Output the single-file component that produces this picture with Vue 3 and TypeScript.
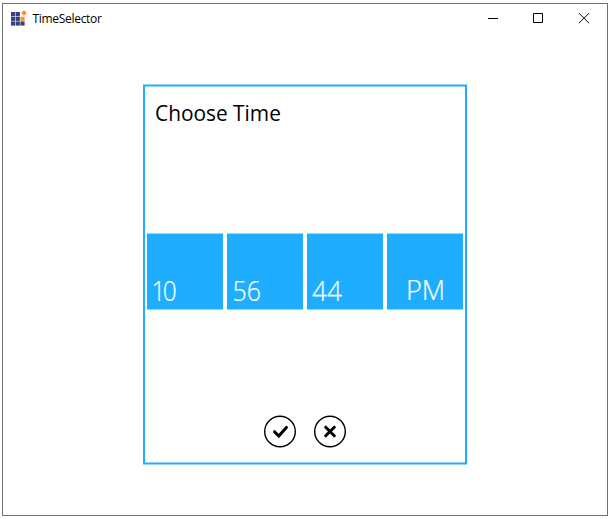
<script setup lang="ts">
import { ref } from 'vue'

interface TimePart {
  id: string
  value: string
}

const parts = ref<TimePart[]>([
  { id: 'hour', value: '10' },
  { id: 'minute', value: '56' },
  { id: 'second', value: '44' },
  { id: 'meridiem', value: 'PM' },
])
</script>

<template>
  <div class="window">
    <header class="titlebar">
      <svg class="logo" width="18" height="18" viewBox="0 0 18 18">
        <g fill="#34427c">
          <rect x="1" y="3" width="4.2" height="4.2" />
          <rect x="5.7" y="3" width="4.2" height="4.2" />
          <rect x="1" y="7.7" width="4.2" height="4.2" />
          <rect x="5.7" y="7.7" width="4.2" height="4.2" />
          <rect x="1" y="12.4" width="4.2" height="4.2" />
          <rect x="5.7" y="12.4" width="4.2" height="4.2" />
          <rect x="10.4" y="12.4" width="4.2" height="4.2" />
        </g>
        <rect x="10.4" y="7.7" width="4.2" height="4.2" fill="#f79430" />
        <path d="M14 1 16.9 3.9 14 6.8 11.1 3.9Z" fill="#f79430" />
      </svg>
      <h1 class="title">TimeSelector</h1>
      <div class="controls">
        <button class="control" aria-label="Minimize">
          <svg width="12" height="12" viewBox="0 0 12 12"><path d="M1 5.5h10" /></svg>
        </button>
        <button class="control" aria-label="Maximize">
          <svg width="12" height="12" viewBox="0 0 12 12"><path d="M1.5 .5h9v9h-9z" /></svg>
        </button>
        <button class="control" aria-label="Close">
          <svg width="12" height="12" viewBox="0 0 12 12"><path d="M1 .2l10 10M11 .2L1 10.2" /></svg>
        </button>
      </div>
    </header>

    <main class="picker">
      <h2 class="heading">Choose Time</h2>
      <div class="tiles">
        <div v-for="part in parts" :key="part.id" class="tile" :class="part.id">
          <span class="value">{{ part.value }}</span>
        </div>
      </div>
      <footer class="actions">
        <button class="action" aria-label="Accept">
          <svg width="34" height="34" viewBox="0 0 34 34">
            <circle cx="17" cy="17" r="15.3" />
            <path d="M11.5 17.2l4.3 4.3 7.6-8.6" />
          </svg>
        </button>
        <button class="action" aria-label="Cancel">
          <svg width="34" height="34" viewBox="0 0 34 34">
            <circle cx="17" cy="17" r="15.3" />
            <path d="M12.7 12.7l8.6 8.6M21.3 12.7l-8.6 8.6" />
          </svg>
        </button>
      </footer>
    </main>
  </div>
</template>

<style>
body {
  background: #fff;
}
</style>

<style scoped>
.window {
  box-sizing: border-box;
  width: 606px;
  height: 513px;
  margin: 3px 0 0 2px;
  border: 1px solid #6f6f70;
  display: flex;
  flex-direction: column;
  align-items: center;
  font-family: "Open Sans", "Noto Sans", sans-serif;
  color: #000;
}
.titlebar {
  align-self: stretch;
  height: 30px;
  display: flex;
  align-items: flex-start;
  padding-left: 7px;
}
.logo {
  margin-top: 5px;
}
.title {
  margin: 6px 0 0 4.5px;
  font-size: 12px;
  line-height: 17px;
  font-weight: 400;
  letter-spacing: -0.3px;
}
.controls {
  margin-left: auto;
  display: flex;
}
.control {
  width: 46px;
  height: 29px;
  padding: 0;
  border: 0;
  background: none;
  display: grid;
  place-items: center;
}
.control:first-child {
  width: 45px;
}
.control svg {
  fill: none;
  stroke: #000;
  stroke-width: 1;
}
.picker {
  box-sizing: border-box;
  width: 324px;
  height: 380px;
  margin-top: 51px;
  border: 2px solid #1faeff;
  display: flex;
  flex-direction: column;
  transform: translateY(-0.5px);
}
.heading {
  margin: 9px 0 0 10px;
  height: 32px;
  font-size: 22px;
  line-height: 32px;
  font-weight: 400;
  white-space: nowrap;
  transform: scaleX(0.948);
  transform-origin: left;
}
.tiles {
  display: flex;
  gap: 4px;
  margin: 106px 2px 0;
}
.tile {
  box-sizing: border-box;
  width: 76px;
  height: 76px;
  background: #1faeff;
  color: #fff;
  display: flex;
  align-items: flex-end;
  padding: 0 0 1px 5px;
  font-size: 27px;
  line-height: 36px;
  font-weight: 300;
}
.value {
  transform: scaleX(0.97);
  transform-origin: left;
  -webkit-text-stroke: 0.2px #fff;
}
.hour .value {
  letter-spacing: -3px;
  transform: translateX(-0.5px) scaleX(0.9);
}
.minute .value {
  transform: translateX(0.5px) scaleX(0.92);
}
.meridiem {
  justify-content: center;
  padding: 0 0 2px;
}
.meridiem .value {
  transform: translateX(0.5px);
}
.actions {
  display: flex;
  justify-content: center;
  gap: 16px;
  margin-top: 105px;
}
.action {
  width: 34px;
  height: 34px;
  padding: 0;
  border: 0;
  background: none;
}
.action svg {
  display: block;
  fill: none;
  stroke: #000;
}
.action circle {
  stroke-width: 1.4;
}
.action path {
  stroke-width: 3;
  stroke-linecap: round;
}
</style>
